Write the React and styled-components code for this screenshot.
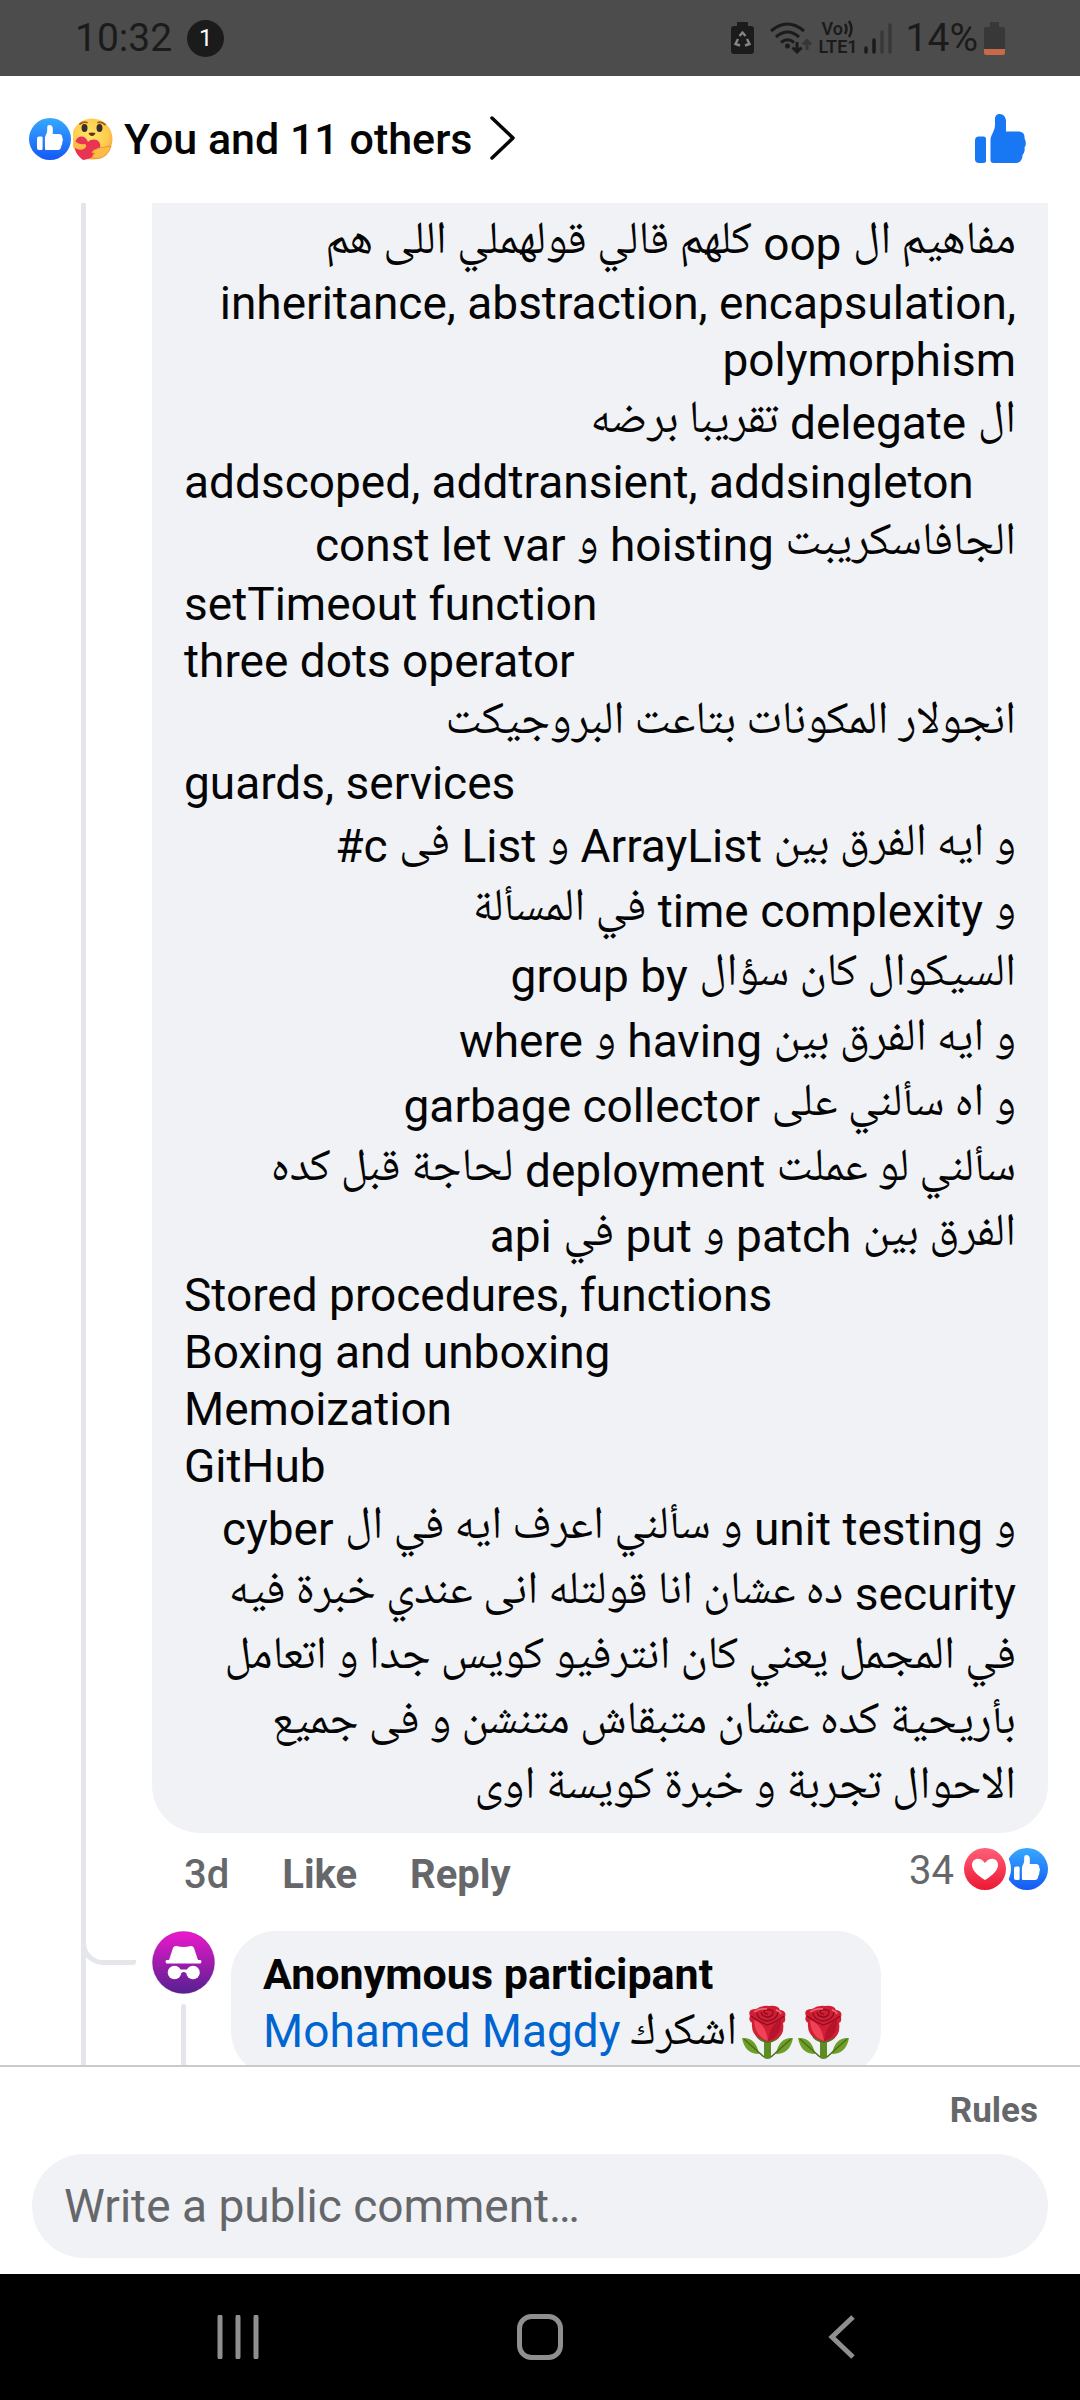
import React from "react";
import styled, { createGlobalStyle } from "styled-components";

const Global = createGlobalStyle`
  *, *::before, *::after { box-sizing: border-box; }
  body { margin: 0; background: #fff; }
  button, input { font: inherit; color: inherit; border: 0; background: none; padding: 0; margin: 0; }
  svg { display: block; flex: none; }
`;

const Screen = styled.div`
  display: flex;
  flex-direction: column;
  height: 100vh;
  font-family: Roboto, "DejaVu Sans", sans-serif;
  color: #050505;
`;

const StatusBar = styled.div`
  flex: none;
  display: flex;
  align-items: center;
  justify-content: space-between;
  height: 76px;
  padding: 0 75px;
  background: #4c4c4c;
  color: #1b1b1b;
  font-size: 39px;
  line-height: 46px;
`;

const StatusGroup = styled.div`
  display: flex;
  align-items: center;
  gap: ${(p) => p.$gap}px;
`;

const Badge = styled.span`
  display: grid;
  place-items: center;
  width: 37px;
  height: 37px;
  border-radius: 50%;
  background: #1b1b1b;
  color: #fff;
  font-size: 24px;
  line-height: 28px;
`;

const Network = styled.span`
  display: flex;
  flex-direction: column;
  font-size: 18px;
  line-height: 18px;
  font-weight: 600;
`;

const VoRow = styled.span`
  display: flex;
  padding-left: 3px;
`;

const Header = styled.header`
  flex: none;
  display: flex;
  align-items: center;
  justify-content: space-between;
  height: 127px;
  padding: 0 54px 2px 29px;
`;

const Reactors = styled.button`
  display: flex;
  align-items: center;
  gap: 11px;
  font-size: 43px;
  line-height: 50px;
  font-weight: 500;
  cursor: pointer;
`;

const ReactionStack = styled.span`
  display: flex;
  gap: 2px;
`;

const IconButton = styled.button`
  display: flex;
  cursor: pointer;
`;

const Thread = styled.main`
  flex: 1;
  min-height: 0;
  overflow: hidden;
  display: flex;
  padding: 0 32px 0 81px;
`;

const ThreadLine = styled.div`
  flex: none;
  width: 5px;
  background: #e4e6eb;
`;

const Comments = styled.div`
  flex: 1;
  min-width: 0;
`;

const Comment = styled.article`
  margin-left: 66px;
`;

const LongBubble = styled.div`
  padding: 7px 32px 13px;
  border-radius: 0 0 48px 48px;
  background: #f0f2f5;
`;

const Line = styled.p`
  margin: 0;
  padding-top: ${(p) => (p.$tall ? 3 : 0)}px;
  font-size: 46px;
  line-height: ${(p) => (p.$tall ? 62 : 57)}px;
  text-align: ${(p) => p.$align};
  white-space: nowrap;
`;

const Arabic = styled.span`
  font-family: "Noto Naskh Arabic UI", "Noto Naskh Arabic", "Noto Sans Arabic", "DejaVu Sans", sans-serif;
  font-size: 46px;
  line-height: 0;
  vertical-align: 1px;
`;

const Actions = styled.div`
  display: flex;
  align-items: center;
  justify-content: space-between;
  height: 98px;
  padding: 0 0 14px 32px;
  color: #65676b;
  font-size: 40px;
  line-height: 46px;
`;

const ActionLinks = styled.div`
  display: flex;
  gap: 53px;
  font-weight: 500;
`;

const TextButton = styled.button`
  font-weight: 700;
  cursor: pointer;
`;

const Tally = styled.div`
  display: flex;
  align-items: flex-start;
  gap: 10px;
  padding-bottom: 8px;
`;

const Reply = styled.article`
  display: flex;
`;

const Elbow = styled.div`
  flex: none;
  width: 55px;
  height: 34px;
  margin: 0 16px 0 -5px;
  border: solid #e4e6eb;
  border-width: 0 0 5px 5px;
  border-radius: 0 3px 3px 22px;
`;

const AvatarColumn = styled.div`
  flex: none;
  display: flex;
  flex-direction: column;
  align-items: center;
  gap: 10px;
  margin-right: 16px;
`;

const ReplyTail = styled.div`
  flex: 1;
  width: 5px;
  border-radius: 3px 3px 0 0;
  background: #e4e6eb;
`;

const ReplyBubble = styled.div`
  padding: 14px 32px 16px;
  border-radius: 45px;
  background: #f0f2f5;
`;

const Author = styled.h2`
  margin: 0;
  font-size: 43px;
  line-height: 58px;
  font-weight: 700;
`;

const ReplyText = styled.div`
  display: flex;
  align-items: center;
  gap: 5px;
  font-size: 46px;
  line-height: 57px;
`;

const Mention = styled.a`
  margin-right: 5px;
  color: #0064d1;
  text-decoration: none;
`;

const Composer = styled.form`
  flex: none;
  display: flex;
  flex-direction: column;
  height: 209px;
  padding: 0 32px 16px;
  border-top: 2px solid #c9cacc;
`;

const RulesButton = styled.button`
  flex: 1;
  align-self: flex-end;
  padding-right: 10px;
  color: #65676b;
  font-size: 35px;
  line-height: 40px;
  font-weight: 700;
  cursor: pointer;
`;

const CommentInput = styled.input`
  height: 104px;
  padding: 0 32px;
  border-radius: 52px;
  background: #f0f2f5;
  font-size: 46px;
  &::placeholder { color: #65676b; opacity: 1; }
`;

const NavBar = styled.nav`
  flex: none;
  display: flex;
  justify-content: space-around;
  align-items: center;
  height: 126px;
  padding: 0 87px;
  background: #000;
`;

const NavButton = styled.button`
  display: grid;
  place-items: center;
  width: 120px;
  height: 120px;
  cursor: pointer;
`;

const THUMB =
  "M15.5 46V26C15.5 21 20 17 20 11V5C20 1.500 22 0 24.500 0C28.500 0 31 3 31 7.500V17.500H43C47.500 17.500 50 20 49.500 24.500C51 27 51.500 31 49.500 33.500C50 36 49.500 39 47.500 41C47.500 45.500 45 49 41 49H18.500C16.500 49 15.500 48 15.500 46Z";

const ThumbShape = ({ fill }) => (
  <g fill={fill}>
    <path d={THUMB} />
    <path d="M4 22.500H8.500Q11 22.500 11 25V46.500Q11 49 8.500 49H4Q0 49 0 45V26.500Q0 22.500 4 22.500Z" />
  </g>
);

const LikeBadge = ({ id, bitten }) => (
  <svg width={bitten ? 40 : 42} height="42" viewBox={bitten ? "2 0 40 42" : "0 0 42 42"} aria-hidden="true">
    <defs>
      <linearGradient id={id} x1="0" y1="0" x2="0" y2="1">
        <stop offset="0" stopColor="#36a9ff" />
        <stop offset="1" stopColor="#1558f5" />
      </linearGradient>
    </defs>
    <circle cx="21" cy="21" r="21" fill={`url(#${id})`} />
    {bitten && <circle cx="-18" cy="21" r="23" fill="#fff" />}
    <g transform="translate(8 7) scale(.51)">
      <ThumbShape fill="#fff" />
    </g>
  </svg>
);

const LoveBadge = () => (
  <svg width="42" height="42" viewBox="0 0 42 42" aria-hidden="true">
    <defs>
      <linearGradient id="love" x1="0" y1="0" x2="0" y2="1">
        <stop offset="0" stopColor="#ff6078" />
        <stop offset="1" stopColor="#ec1733" />
      </linearGradient>
    </defs>
    <circle cx="21" cy="21" r="21" fill="url(#love)" />
    <path d="M21 32C13 27 8 22 8 17C8 9.500 17 8.500 21 15C25 8.500 34 9.500 34 17C34 22 29 27 21 32Z" fill="#fff" />
  </svg>
);

const CareBadge = () => (
  <svg width="40" height="42" viewBox="0 0 40 42" aria-hidden="true">
    <defs>
      <radialGradient id="care" cx=".45" cy=".4" r=".65">
        <stop offset="0" stopColor="#ffe36a" />
        <stop offset=".7" stopColor="#fdcb4c" />
        <stop offset="1" stopColor="#f2994a" />
      </radialGradient>
    </defs>
    <circle cx="19" cy="21" r="20.500" fill="url(#care)" />
    <g fill="none" stroke="#a8590f" strokeWidth="1.800" strokeLinecap="round">
      <path d="M7 6Q10 3.500 14 4.500M25 4.500Q29 3.500 32 6.500" />
    </g>
    <ellipse cx="11.500" cy="10" rx="3" ry="4" fill="#33302f" />
    <ellipse cx="26.500" cy="10" rx="3" ry="4" fill="#33302f" />
    <path d="M15.500 15Q19 14 22.500 15Q21.500 18 19 18Q16.500 18 15.500 15Z" fill="#6b2f0c" />
    <path d="M10 42C3 37 1 31 2 25C4 16 13 17 15 24C20 19 29 22 27 30C25 37 18 41 10 42Z" fill="#ea3352" />
    <path d="M1 22Q5 27 12 26Q15 28 11 31Q5 33 1 29Z" fill="#fbbd45" />
    <path d="M38 28Q31 29 26 30Q20 32 19 34Q19 36 22 35Q18 38 20 40Q27 42 33 37Q37 33 38 28Z" fill="#fbbd45" stroke="#e98a2d" strokeWidth=".8" />
  </svg>
);

const Rose = () => (
  <svg width="51" height="54" viewBox="0 0 51 54" role="img" aria-label="rose">
    <path d="M22 34H29V53Q25.500 55 22 53Z" fill="#5d8c22" />
    <path d="M0 33Q14 32 17 49Q3 49 0 33ZM51 33Q37 32 34 49Q48 49 51 33Z" fill="#6f9f28" />
    <path d="M2 34L22 52M49 34L29 52" stroke="#47701a" strokeWidth="1.500" fill="none" />
    <path d="M13 29Q16 37 26 38Q36 37 39 29L34 33L26 36L18 33Z" fill="#4d7a1c" />
    <path d="M8 11Q5 4 14 4Q20 0 27 1Q36 0 38 5Q45 6 43 12Q44 17 41 18Q43 30 34 34L26 37L17 33Q9 29 10 18Q6 16 8 11Z" fill="#d01f35" />
    <path d="M12 15Q24 19 26 36Q13 32 12 15Z" fill="#ef4257" />
    <path d="M39 15Q28 19 26 36Q39 32 39 15Z" fill="#b5142a" />
    <g fill="none" stroke="#8d0c1f" strokeWidth="1.300">
      <path d="M9 11Q17 17 25 20Q35 17 42 11M15 8Q16 15 25 16Q35 15 36 7M19 7Q20 12 26 12Q32 11 31 6Q26 3 22 6Q22 9 26 9" />
    </g>
    <path d="M12 7Q18 3 25 4M34 5Q38 6 39 9" stroke="#f46a78" strokeWidth="1.500" fill="none" />
  </svg>
);

const AnonymousAvatar = () => (
  <svg width="63" height="63" viewBox="0 0 63 63" role="img" aria-label="Anonymous participant">
    <defs>
      <linearGradient id="anon" x1="0" y1="0" x2="0" y2="1">
        <stop offset="0" stopColor="#ee18cc" />
        <stop offset="1" stopColor="#54208f" />
      </linearGradient>
    </defs>
    <circle cx="31.500" cy="31.500" r="31" fill="url(#anon)" stroke="#7a1f96" strokeOpacity=".4" />
    <g fill="#fff">
      <path d="M21 17Q22 14.500 24.500 15Q32 17 38.500 15Q41 14.500 42 17L46 29H48.500Q50.500 30.500 48.500 32.500H14.500Q12.500 30.500 14.500 29H17Z" />
      <circle cx="22.500" cy="41.500" r="6.800" />
      <circle cx="41" cy="41.500" r="6.800" />
      <path d="M27 38.500H36V42H34Q31.500 40 29.500 42H27Z" />
    </g>
  </svg>
);

const RecycleBattery = () => (
  <svg width="23" height="32" viewBox="0 0 23 32" aria-hidden="true">
    <path d="M6 0H17V4H20Q23 4 23 7V29Q23 32 20 32H3Q0 32 0 29V7Q0 4 3 4H6Z" fill="#1b1b1b" />
    <path d="M8.500 14L11.500 10.500L14.500 14M16 17L18.500 22L14 23.500M9 23.500L4.500 22L7 17" fill="none" stroke="#858585" strokeWidth="2.400" />
  </svg>
);

const Wifi = () => (
  <svg width="42" height="32" viewBox="0 0 42 32" aria-hidden="true">
    <g fill="none" stroke="#1b1b1b" strokeWidth="3">
      <path d="M1 9Q17.500 -5 34 9M6 15Q17.500 5 29 15M11 20.500Q17.500 15 24 20.500" />
      <path d="M27 20V30M22.500 25.500L27 30L31.500 25.500" />
    </g>
    <circle cx="17.500" cy="24" r="2.500" fill="#1b1b1b" />
    <path d="M37 28V19M33 22.500L37 18.500L41 22.500" fill="none" stroke="#363636" strokeWidth="3" />
  </svg>
);

const VolteWaves = () => (
  <svg width="11" height="18" viewBox="0 0 11 18" aria-hidden="true">
    <path d="M2 4Q5 9 2 14M6 1Q11 9 6 17" fill="none" stroke="#1b1b1b" strokeWidth="2.500" />
  </svg>
);

const Signal = () => (
  <svg width="28" height="31" viewBox="0 0 28 31" aria-hidden="true">
    <path d="M2 25V29M10 17V29" stroke="#1b1b1b" strokeWidth="3.500" strokeLinecap="round" />
    <path d="M18 9V29M26 2V29" stroke="#383838" strokeWidth="3.500" strokeLinecap="round" />
  </svg>
);

const LowBattery = () => (
  <svg width="21" height="33" viewBox="0 0 21 33" aria-hidden="true">
    <path d="M6 0H15V5H19Q21 5 21 7V27H0V7Q0 5 2 5H6Z" fill="#383838" />
    <path d="M0 27H21V31Q21 33 19 33H2Q0 33 0 31Z" fill="#c8694a" />
  </svg>
);

const ARABIC_RUN = /([\u0600-\u06FF]+(?:\s+[\u0600-\u06FF]+)*)/;

const mixed = (text) =>
  text.split(ARABIC_RUN).map((part, i) => (i % 2 ? <Arabic key={i}>{part}</Arabic> : part));

const lines = [
  { text: "مفاهيم ال oop كلهم قالي قولهملي اللى هم", rtl: true },
  { text: "inheritance, abstraction, encapsulation,", end: true },
  { text: "polymorphism", end: true },
  { text: "ال delegate تقريبا برضه", rtl: true },
  { text: "addscoped, addtransient, addsingleton" },
  { text: "الجافاسكريبت hoisting و const let var", rtl: true },
  { text: "setTimeout function" },
  { text: "three dots operator" },
  { text: "انجولار المكونات بتاعت البروجيكت", rtl: true },
  { text: "guards, services" },
  { text: "و ايه الفرق بين ArrayList و List فى c#", rtl: true },
  { text: "و time complexity في المسألة", rtl: true },
  { text: "السيكوال كان سؤال group by", rtl: true },
  { text: "و ايه الفرق بين having و where", rtl: true },
  { text: "و اه سألني على garbage collector", rtl: true },
  { text: "سألني لو عملت deployment لحاجة قبل كده", rtl: true },
  { text: "الفرق بين patch و put في api", rtl: true },
  { text: "Stored procedures, functions" },
  { text: "Boxing and unboxing" },
  { text: "Memoization" },
  { text: "GitHub" },
  { text: "و unit testing و سألني اعرف ايه في ال cyber", rtl: true },
  { text: "security ده عشان انا قولتله انى عندي خبرة فيه", rtl: true },
  { text: "في المجمل يعني كان انترفيو كويس جدا و اتعامل", rtl: true },
  { text: "بأريحية كده عشان متبقاش متنشن و فى جميع", rtl: true },
  { text: "الاحوال تجربة و خبرة كويسة اوى", rtl: true },
];

export default function App() {
  return (
    <Screen>
      <Global />
      <StatusBar>
        <StatusGroup $gap={15}>
          <span>10:32</span>
          <Badge>1</Badge>
        </StatusGroup>
        <StatusGroup $gap={6}>
          <StatusGroup $gap={16}>
            <RecycleBattery />
            <Wifi />
          </StatusGroup>
          <Network>
            <VoRow>
              Vo
              <VolteWaves />
            </VoRow>
            <span>LTE1</span>
          </Network>
          <StatusGroup $gap={14}>
            <Signal />
            <span>14%</span>
          </StatusGroup>
          <LowBattery />
        </StatusGroup>
      </StatusBar>

      <Header>
        <Reactors type="button">
          <ReactionStack>
            <LikeBadge id="like-top" />
            <CareBadge />
          </ReactionStack>
          <span>You and 11 others</span>
          <svg width="44" height="46" viewBox="0 0 44 46" aria-hidden="true">
            <path d="M9 2L30 22L9 42" fill="none" stroke="#050505" strokeWidth="3.500" strokeLinecap="round" strokeLinejoin="round" />
          </svg>
        </Reactors>
        <IconButton type="button" aria-label="Like">
          <svg width="51" height="50" viewBox="0 0 51 50">
            <ThumbShape fill="#1877f2" />
          </svg>
        </IconButton>
      </Header>

      <Thread>
        <ThreadLine />
        <Comments>
          <Comment>
            <LongBubble>
              {lines.map((l, i) => (
                <Line key={i} dir={l.rtl ? "rtl" : "ltr"} $tall={l.rtl} $align={l.rtl || l.end ? "right" : "left"}>
                  {mixed(l.text)}
                </Line>
              ))}
            </LongBubble>
            <Actions>
              <ActionLinks>
                <span>3d</span>
                <TextButton type="button">Like</TextButton>
                <TextButton type="button">Reply</TextButton>
              </ActionLinks>
              <Tally>
                <span>34</span>
                <ReactionStack>
                  <LoveBadge />
                  <LikeBadge id="like-tally" bitten />
                </ReactionStack>
              </Tally>
            </Actions>
          </Comment>
          <Reply>
            <Elbow />
            <AvatarColumn>
              <AnonymousAvatar />
              <ReplyTail />
            </AvatarColumn>
            <ReplyBubble>
              <Author>Anonymous participant</Author>
              <ReplyText>
                <Mention href="#profile">Mohamed Magdy</Mention>
                <Arabic dir="rtl">اشكرك</Arabic>
                <Rose />
                <Rose />
              </ReplyText>
            </ReplyBubble>
          </Reply>
        </Comments>
      </Thread>

      <Composer>
        <RulesButton type="button">Rules</RulesButton>
        <CommentInput type="text" aria-label="Write a public comment" placeholder="Write a public comment…" />
      </Composer>

      <NavBar>
        <NavButton type="button" aria-label="Recent apps">
          <svg width="42" height="44" viewBox="0 0 42 44">
            <path d="M3 2V42M21 2V42M39 2V42" stroke="#8f8f8f" strokeWidth="5" strokeLinecap="round" />
          </svg>
        </NavButton>
        <NavButton type="button" aria-label="Home">
          <svg width="46" height="46" viewBox="0 0 46 46">
            <rect x="2.500" y="2.500" width="41" height="41" rx="12" fill="none" stroke="#8f8f8f" strokeWidth="5" />
          </svg>
        </NavButton>
        <NavButton type="button" aria-label="Back">
          <svg width="28" height="44" viewBox="0 0 28 44">
            <path d="M25 2L4 22L25 42" fill="none" stroke="#8f8f8f" strokeWidth="5" />
          </svg>
        </NavButton>
      </NavBar>
    </Screen>
  );
}
